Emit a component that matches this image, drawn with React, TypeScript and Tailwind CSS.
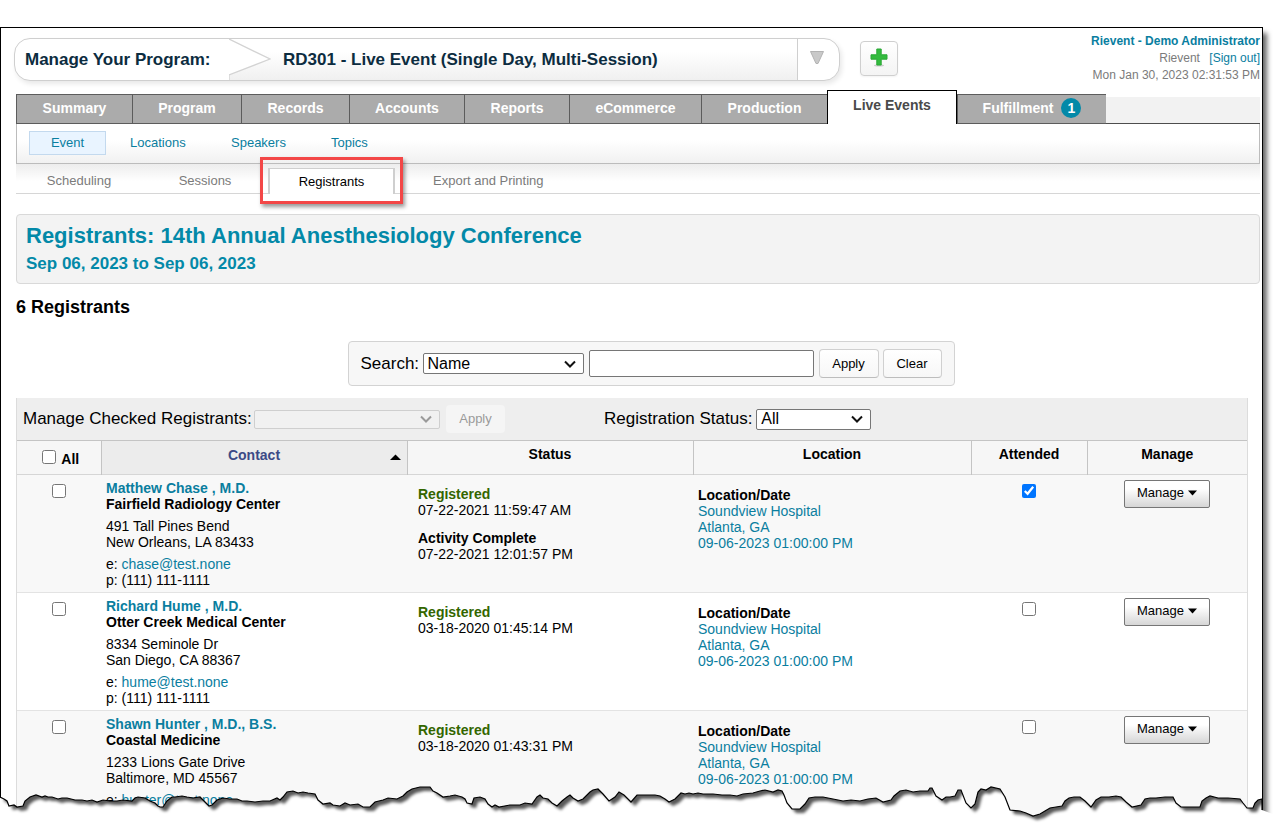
import { useState } from "react";
import type { ReactNode } from "react";
import clsx from "clsx";

interface Registrant {
  id: number;
  name: string;
  organization: string;
  street: string;
  city: string;
  email: string;
  phone: string;
  registeredAt: string;
  completedAt?: string;
  attended: boolean;
}

const TABS = [
  { label: "Summary", width: "w-[116px]" },
  { label: "Program", width: "w-[109px]" },
  { label: "Records", width: "w-[108px]" },
  { label: "Accounts", width: "w-[115px]" },
  { label: "Reports", width: "w-[105px]" },
  { label: "eCommerce", width: "w-[132px]" },
  { label: "Production", width: "w-[126px]" },
  { label: "Live Events", width: "w-[130px]" },
  { label: "Fulfillment", width: "w-[149px]", count: 1 },
];

const REGISTRANTS: Registrant[] = [
  {
    id: 1,
    name: "Matthew Chase , M.D.",
    organization: "Fairfield Radiology Center",
    street: "491 Tall Pines Bend",
    city: "New Orleans, LA 83433",
    email: "chase@test.none",
    phone: "(111) 111-1111",
    registeredAt: "07-22-2021 11:59:47 AM",
    completedAt: "07-22-2021 12:01:57 PM",
    attended: true,
  },
  {
    id: 2,
    name: "Richard Hume , M.D.",
    organization: "Otter Creek Medical Center",
    street: "8334 Seminole Dr",
    city: "San Diego, CA 88367",
    email: "hume@test.none",
    phone: "(111) 111-1111",
    registeredAt: "03-18-2020 01:45:14 PM",
    attended: false,
  },
  {
    id: 3,
    name: "Shawn Hunter , M.D., B.S.",
    organization: "Coastal Medicine",
    street: "1233 Lions Gate Drive",
    city: "Baltimore, MD 45567",
    email: "hunter@test.none",
    phone: "(111) 111-1111",
    registeredAt: "03-18-2020 01:43:31 PM",
    attended: false,
  },
];

const TEAR =
  "0,797 4,799 7,801 9,806 14,805 17,807 23,806 25,801 30,797 36,795 42,797 45,796 48,797 52,797 58,799 62,798 67,798 75,800 82,800 87,801 92,800 97,802 103,800 110,801 117,801 123,800 132,801 135,798 138,797 145,798 150,801 155,803 158,806 160,807 163,807 165,804 167,801 172,797 175,797 182,796 187,797 193,798 200,797 204,801 209,806 212,805 217,800 223,798 230,799 237,799 242,801 247,801 255,802 263,801 270,801 277,798 280,800 283,797 287,792 293,791 298,793 303,792 308,793 315,794 318,800 323,804 330,803 333,805 340,806 345,803 350,805 358,804 363,807 370,807 375,802 383,800 388,798 397,799 403,796 407,792 412,789 420,787 430,787 433,791 437,793 443,797 450,796 455,795 462,797 465,799 467,803 472,804 474,798 480,797 485,799 488,804 492,807 495,805 499,807 510,805 520,805 525,803 532,804 537,797 540,795 543,798 548,799 552,803 557,806 562,801 567,797 570,795 573,798 578,801 583,799 590,792 593,790 598,789 603,794 609,801 615,797 619,792 624,795 631,802 637,795 647,795 655,795 660,796 665,799 669,802 675,799 681,793 685,794 689,793 693,794 698,793 703,794 713,794 722,795 730,795 737,796 743,794 753,793 760,791 765,790 773,792 778,790 782,791 784,795 787,803 792,809 800,809 805,804 809,798 815,797 823,797 833,799 843,801 851,800 860,801 868,799 876,798 883,802 891,800 894,796 900,791 906,790 913,792 920,791 928,791 930,788 932,788 936,796 942,800 946,797 950,797 955,796 958,790 961,790 966,803 971,808 975,804 978,792 981,789 986,790 991,787 1000,789 1005,797 1010,810 1020,811 1026,813 1033,816 1040,814 1045,811 1050,808 1056,807 1062,806 1065,801 1069,798 1074,797 1080,797 1085,801 1091,807 1096,800 1101,797 1109,797 1116,796 1121,797 1126,802 1132,807 1141,805 1145,799 1150,798 1156,798 1165,797 1173,797 1176,803 1181,807 1191,807 1200,807 1202,801 1206,798 1210,796 1218,798 1228,798 1240,799 1243,803 1247,808 1253,808 1255,803 1258,800 1262,799";

const LINK = "text-[#0a7e9f] hover:underline";

const BUTTON =
  "rounded border border-[#d0d0d0] border-b-[#bdbdbd] bg-linear-to-b from-white to-[#f7f7f7] text-[13px] text-black";

function SelectBox({ id, options, className, disabled }: { id: string; options: string[]; className: string; disabled?: boolean }) {
  return (
    <span className={clsx("relative inline-flex", className)}>
      <select
        id={id}
        disabled={disabled}
        className={clsx(
          "w-full appearance-none rounded-xs border pr-6 pl-1 text-[16px] leading-[18px]",
          disabled ? "h-[19px] border-[#cfcfcf] bg-[#f1f1f1]" : "h-[21px] border-[#767676] bg-white"
        )}
      >
        {options.map((o) => (
          <option key={o}>{o}</option>
        ))}
      </select>
      <svg viewBox="0 0 12 8" className="pointer-events-none absolute top-1/2 right-2 h-2 w-3 -translate-y-1/2" aria-hidden="true">
        <path d="M1 1.5 6 6.5 11 1.5" fill="none" stroke={disabled ? "#9a9a9a" : "#111"} strokeWidth="2" />
      </svg>
    </span>
  );
}

function ProgramBar() {
  return (
    <div className="mt-[5px] flex h-[43px] w-[826px] overflow-hidden rounded-2xl border border-[#cfcfcf] bg-white text-[17px] font-bold text-[#0c2c40] shadow-[2px_3px_5px_rgba(0,0,0,0.09)]">
      <div className="flex w-[214px] items-center pl-[10px]">Manage Your Program:</div>
      <div className="flex flex-1 items-center bg-linear-to-b from-white from-30% to-[#f0f0f0]">
        <svg viewBox="0 0 42 41" className="h-full w-[42px]" aria-hidden="true">
          <path d="M0 0 41 20 0 36Z" fill="#fff" />
          <path d="M0 0 41 20 0 36V41" fill="none" stroke="#d3d3d3" strokeWidth="1.3" />
        </svg>
        <span className="pl-3">RD301 - Live Event (Single Day, Multi-Session)</span>
      </div>
      <button type="button" aria-label="Choose program" className="flex w-[42px] items-center justify-center border-l border-[#cfcfcf] pr-1 pb-1">
        <svg viewBox="0 0 16 15" className="h-[15px] w-4" aria-hidden="true">
          <path d="M1.5 1.5H14.5L9 13.5H7Z" fill="#c9c9c9" stroke="#b3b3b3" strokeLinejoin="round" />
        </svg>
      </button>
    </div>
  );
}

function Tabs() {
  return (
    <nav className="flex h-[34px] items-end bg-[linear-gradient(to_bottom,transparent_7px,#f2f2f2_7px,#f2f2f2_33px,#4d4d4d_33px)] text-[14px] font-bold">
      {TABS.map((tab) => {
        const active = tab.label === "Live Events";
        return (
          <a
            key={tab.label}
            href="#"
            className={clsx(
              "flex items-center justify-center",
              tab.width,
              active
                ? "h-[34px] border-x border-t border-black bg-white pb-[5px] text-[#4a4a4a]"
                : "h-[30px] border-y border-l border-[#5c5c5c] bg-[#ababab] pb-[2px] text-white"
            )}
          >
            {tab.label}
            {tab.count && (
              <span className="ml-2 flex h-5 w-5 items-center justify-center rounded-full bg-[#0389a8]">{tab.count}</span>
            )}
          </a>
        );
      })}
    </nav>
  );
}

function SubNav() {
  return (
    <nav className="flex h-10 items-center gap-6 border-x border-b border-[#bcbcbc] bg-linear-to-b from-white from-40% to-[#f1f1f1] pb-[2px] pl-3 text-[13px] text-[#0a7e9f]">
      <a href="#" className="flex h-6 w-[77px] items-center justify-center border border-[#c3d9ee] bg-[#e9f4ff]">
        Event
      </a>
      <a href="#" className="w-[77px] hover:underline">Locations</a>
      <a href="#" className="w-[76px] hover:underline">Speakers</a>
      <a href="#" className="hover:underline">Topics</a>
    </nav>
  );
}

function SectionNav() {
  return (
    <nav className="flex h-[30px] items-end border-b border-[#d6d6d6] bg-linear-to-b from-[#ededed] to-white to-60% text-[13px] text-[#7b7b7b]">
      <a href="#" className="flex h-6 w-[126px] items-center justify-center">Scheduling</a>
      <a href="#" className="flex h-6 w-[126px] items-center justify-center">Sessions</a>
      <a
        href="#"
        aria-current="page"
        className="relative -mb-px flex h-[26px] w-[127px] items-center justify-center border-x-2 border-t border-[#cfcfcf] bg-white text-black"
      >
        Registrants
        <span className="pointer-events-none absolute -inset-x-[10px] -top-[12px] -bottom-[10px] border-3 border-[#f34747] shadow-[2px_3px_4px_rgba(0,0,0,0.4)]" />
      </a>
      <a href="#" className="ml-[38px] flex h-6 items-center">Export and Printing</a>
    </nav>
  );
}

function HeadCell({ children, last }: { children: ReactNode; last?: boolean }) {
  return (
    <th scope="col" className={clsx("pt-[5px] align-top leading-4", !last && "border-r border-[#c4c4c4]")}>
      {children}
    </th>
  );
}

function RegistrantRow({ item, striped }: { item: Registrant; striped: boolean }) {
  const [attended, setAttended] = useState(item.attended);

  return (
    <tr className={clsx("border-b border-[#e3e3e3] align-top", striped && "bg-[#f8f8f8]")}>
      <td className="pt-[9px] text-center">
        <input type="checkbox" aria-label={`Select ${item.name}`} className="h-3.5 w-3.5" />
      </td>
      <td className="pt-[5px] pb-[4px] pl-[5px]">
        <a href="#" className="font-bold text-[#0a7e9f] hover:underline">{item.name}</a>
        <p className="font-bold">{item.organization}</p>
        <p className="mt-[6px]">{item.street}</p>
        <p>{item.city}</p>
        <p className="mt-[6px]">
          e: <a href="#" className={LINK}>{item.email}</a>
        </p>
        <p>p: {item.phone}</p>
      </td>
      <td className="pt-[11px] pl-[11px]">
        <p className="font-bold text-[#336600]">Registered</p>
        <p>{item.registeredAt}</p>
        {item.completedAt && (
          <>
            <p className="mt-3 font-bold">Activity Complete</p>
            <p>{item.completedAt}</p>
          </>
        )}
      </td>
      <td className="pt-3 pl-[5px]">
        <p className="font-bold">Location/Date</p>
        <a href="#" className="block text-[#0a7e9f]">Soundview Hospital</a>
        <a href="#" className="block text-[#0a7e9f]">Atlanta, GA</a>
        <a href="#" className="block text-[#0a7e9f]">09-06-2023 01:00:00 PM</a>
      </td>
      <td className="pt-[9px] text-center">
        <input
          type="checkbox"
          aria-label={`${item.name} attended`}
          checked={attended}
          onChange={(e) => setAttended(e.target.checked)}
          className="h-3.5 w-3.5"
        />
      </td>
      <td className="pt-[5px] text-center">
        <button
          type="button"
          className="inline-flex h-7 w-[86px] items-center justify-center gap-1 rounded-xs border border-[#767676] bg-linear-to-b from-white from-30% to-[#d6d6d6] pb-px text-[13px]"
        >
          Manage
          <svg viewBox="0 0 9 6" className="h-[6px] w-[9px]" aria-hidden="true">
            <path d="M0 0.5H9L4.5 5.5Z" />
          </svg>
        </button>
      </td>
    </tr>
  );
}

// ragged paper edge along the bottom of the page
function TornEdge() {
  const below = `${TEAR} 1262,810 1273,814 1273,829 0,829`;
  return (
    <svg
      viewBox="0 780 1273 49"
      preserveAspectRatio="none"
      className="pointer-events-none absolute bottom-0 left-0 h-[49px] w-full"
      aria-hidden="true"
    >
      <defs>
        <clipPath id="below-tear">
          <polygon points={below} />
        </clipPath>
        <filter id="tear-blur" x="-5%" y="-50%" width="110%" height="200%">
          <feGaussianBlur stdDeviation="1.8" />
        </filter>
      </defs>
      <polygon points={below} fill="#fff" />
      <g clipPath="url(#below-tear)">
        <polygon points={`${TEAR} 1262,780 0,780`} transform="translate(4 4)" fill="#000" fillOpacity="0.65" filter="url(#tear-blur)" />
      </g>
      <polyline points={`${TEAR} 1262,810`} fill="none" stroke="#000" strokeWidth="1.2" />
    </svg>
  );
}

export default function App() {
  return (
    <div className="relative h-screen overflow-hidden bg-white pt-[27px] font-['Liberation_Sans',Arial,sans-serif] text-black">
      <div className="mr-[10px] min-h-full border-x border-t border-black bg-white pr-[2px] shadow-[4px_6px_5px_rgba(0,0,0,0.6)]">
        {/* Header */}
        <header className="flex h-[62px] items-start pt-[5px] pl-[13px]">
          <ProgramBar />
          <button
            type="button"
            aria-label="Add"
            className="mt-2 ml-5 flex h-[35px] w-[38px] items-center justify-center rounded border border-[#cfcfcf] bg-linear-to-b from-white to-[#f4f4f4] pb-1 shadow-xs"
          >
            <svg viewBox="0 0 20 20" className="h-5 w-5" aria-hidden="true">
              <ellipse cx="10" cy="18.5" rx="5" ry="1" fill="#ccc" />
              <path d="M7.8 2h4.4v5.8H18v4.4h-5.8V18H7.8v-5.8H2V7.8h5.8Z" fill="#33bb3e" stroke="#2aa836" strokeLinejoin="round" />
            </svg>
          </button>
          <div className="ml-auto text-right text-[12px] leading-[17px] text-[#7b7b7b]">
            <p className="font-bold text-[#0a7e9f]">Rievent - Demo Administrator</p>
            <p>
              Rievent <a href="#" className="ml-[6px] text-[#0a7e9f]">[Sign out]</a>
            </p>
            <p>Mon Jan 30, 2023 02:31:53 PM</p>
          </div>
        </header>

        <main className="pl-[15px]">
          <Tabs />
          <SubNav />
          <SectionNav />

          <section className="mt-5 rounded border border-[#d9d9d9] bg-[#f3f3f3] pt-[5px] pb-[9px] pl-[9px] font-bold text-[#0389a8]">
            <h1 className="text-[22px] leading-8">Registrants: 14th Annual Anesthesiology Conference</h1>
            <p className="mt-[2px] text-[17px] leading-5">Sep 06, 2023 to Sep 06, 2023</p>
          </section>

          <h2 className="mt-[11px] text-[18px] leading-6 font-bold">6 Registrants</h2>

          {/* Search */}
          <div className="mt-[22px] flex justify-center pl-[26px]">
            <form className="flex h-[45px] items-center rounded border border-[#d3d3d3] bg-[#f7f7f7] px-3" onSubmit={(e) => e.preventDefault()}>
              <label htmlFor="search-by" className="mr-1 w-[58px] text-[17px]">Search:</label>
              <SelectBox id="search-by" options={["Name", "Email", "Organization"]} className="mr-[5px] w-[161px]" />
              <input type="text" aria-label="Search text" className="mr-[5px] h-[27px] w-[225px] rounded-xs border border-[#767676] bg-white px-1 text-[16px]" />
              <button type="submit" className={clsx(BUTTON, "mr-1 h-[29px] w-[60px]")}>Apply</button>
              <button type="reset" className={clsx(BUTTON, "h-[29px] w-[59px]")}>Clear</button>
            </form>
          </div>

          {/* Registrants table */}
          <div className="mt-3 mr-3 border-r border-l border-[#dcdcdc]">
            <div className="flex h-[43px] items-center border-b border-[#c4c4c4] bg-[#eee] pl-[6px] text-[17px]">
              <label htmlFor="bulk-action" className="mr-[5px] w-[226px] whitespace-nowrap">Manage Checked Registrants:</label>
              <SelectBox id="bulk-action" options={[""]} className="mr-[6px] w-[186px]" disabled />
              <button type="button" disabled className="h-[28px] w-[59px] rounded bg-[#f5f5f5] text-[13px] text-[#9a9a9a]">
                Apply
              </button>
              <label htmlFor="registration-status" className="mr-1 ml-[99px] whitespace-nowrap">Registration Status:</label>
              <SelectBox id="registration-status" options={["All", "Registered", "Cancelled"]} className="w-[115px]" />
            </div>

            <table className="w-full table-fixed border-collapse text-[14px] leading-4">
              <colgroup>
                <col className="w-[84px]" />
                <col className="w-[306px]" />
                <col className="w-[286px]" />
                <col />
                <col className="w-[116px]" />
                <col className="w-[160px]" />
              </colgroup>
              <thead>
                <tr className="h-[33px] border-b border-[#d6d6d6] bg-[#f6f6f6]">
                  <th scope="col" className="border-r border-[#c4c4c4] pl-1">
                    <label className="inline-flex items-center gap-[5px]">
                      <input type="checkbox" className="h-3.5 w-3.5" />
                      <span className="pt-1">All</span>
                    </label>
                  </th>
                  <th scope="col" aria-sort="ascending" className="border-r border-[#c4c4c4] bg-[#ececec] text-[#3c4a86]">
                    <span className="flex items-center pr-[6px] pl-[17px]">
                      <span className="flex-1 pb-1">Contact</span>
                      <svg viewBox="0 0 11 6" className="h-[6px] w-[11px]" aria-hidden="true">
                        <path d="M0 6 5.5 0.5 11 6Z" fill="#000" />
                      </svg>
                    </span>
                  </th>
                  <HeadCell>Status</HeadCell>
                  <HeadCell>Location</HeadCell>
                  <HeadCell>Attended</HeadCell>
                  <HeadCell last>Manage</HeadCell>
                </tr>
              </thead>
              <tbody>
                {REGISTRANTS.map((item, i) => (
                  <RegistrantRow key={item.id} item={item} striped={i % 2 === 0} />
                ))}
              </tbody>
            </table>
          </div>
        </main>
      </div>

      <TornEdge />
    </div>
  );
}
